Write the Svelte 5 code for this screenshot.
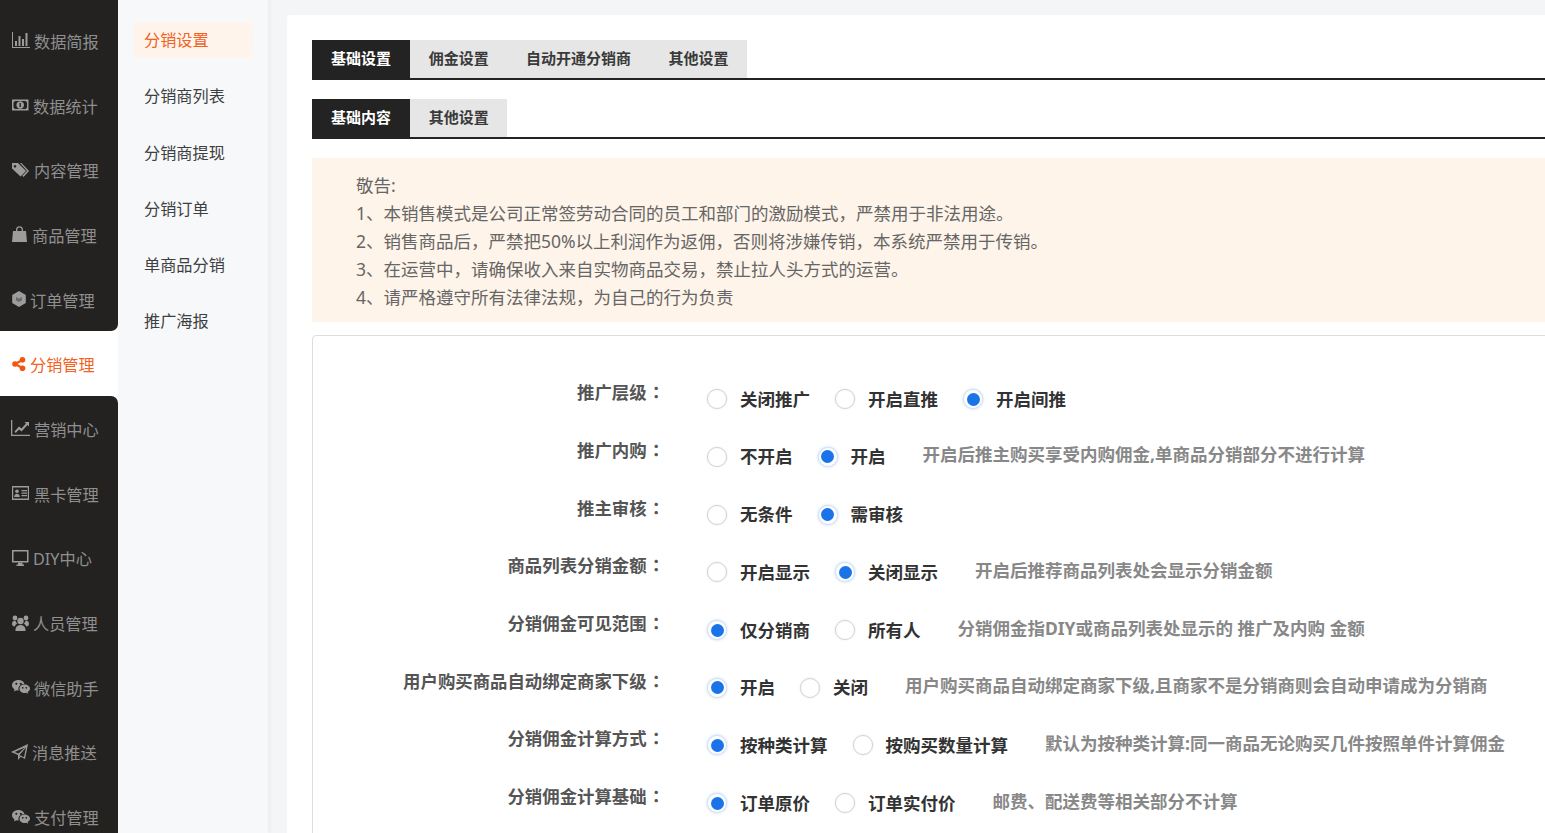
<script>
	const navItems = [
		{ name: '数据简报', icon: 'bar', w: 17 },
		{ name: '数据统计', icon: 'money', w: 16 },
		{ name: '内容管理', icon: 'tag', w: 17 },
		{ name: '商品管理', icon: 'bag', w: 15 },
		{ name: '订单管理', icon: 'cube', w: 13 },
		{ name: '分销管理', icon: 'share', w: 13 },
		{ name: '营销中心', icon: 'line', w: 17 },
		{ name: '黑卡管理', icon: 'card', w: 17 },
		{ name: 'DIY中心', icon: 'desktop', w: 16 },
		{ name: '人员管理', icon: 'users', w: 16 },
		{ name: '微信助手', icon: 'wechat', w: 17 },
		{ name: '消息推送', icon: 'plane', w: 15 },
		{ name: '支付管理', icon: 'wechat', w: 17 }
	];
	const activeNav = 5;

	const subItems = ['分销设置', '分销商列表', '分销商提现', '分销订单', '单商品分销', '推广海报'];

	const notices = [
		'敬告:',
		'1、本销售模式是公司正常签劳动合同的员工和部门的激励模式，严禁用于非法用途。',
		'2、销售商品后，严禁把50%以上利润作为返佣，否则将涉嫌传销，本系统严禁用于传销。',
		'3、在运营中，请确保收入来自实物商品交易，禁止拉人头方式的运营。',
		'4、请严格遵守所有法律法规，为自己的行为负责'
	];

	const rows = [
		{ label: '推广层级', options: ['关闭推广', '开启直推', '开启间推'], checked: 2 },
		{ label: '推广内购', options: ['不开启', '开启'], checked: 1, hint: '开启后推主购买享受内购佣金,单商品分销部分不进行计算' },
		{ label: '推主审核', options: ['无条件', '需审核'], checked: 1 },
		{ label: '商品列表分销金额', options: ['开启显示', '关闭显示'], checked: 1, hint: '开启后推荐商品列表处会显示分销金额' },
		{ label: '分销佣金可见范围', options: ['仅分销商', '所有人'], checked: 0, hint: '分销佣金指DIY或商品列表处显示的 推广及内购 金额' },
		{ label: '用户购买商品自动绑定商家下级', options: ['开启', '关闭'], checked: 0, hint: '用户购买商品自动绑定商家下级,且商家不是分销商则会自动申请成为分销商' },
		{ label: '分销佣金计算方式', options: ['按种类计算', '按购买数量计算'], checked: 0, hint: '默认为按种类计算:同一商品无论购买几件按照单件计算佣金' },
		{ label: '分销佣金计算基础', options: ['订单原价', '订单实付价'], checked: 0, hint: '邮费、配送费等相关部分不计算' }
	];
</script>

<div class="page">
	<nav class="nav">
		{#each navItems as item, n}
			<div
				class="nav-item"
				class:active={n === activeNav}
				class:above={n === activeNav - 1}
				class:below={n === activeNav + 1}
			>
				<svg width={item.w} height="16" viewBox="0 0 {item.w} 16" fill="currentColor">
					{#if item.icon === 'bar'}
						<path d="M0 0h1v15h17v1H0z" /><path d="M3 9h2v5H3zM6.500 4h2v10h-2zM10 7h2v7h-2zM13.500 1h2v13h-2z" />
					{:else if item.icon === 'money'}
						<path fill-rule="evenodd" d="M0 2.500h16.500v11H0zM3 4 1.500 5.500v5L3 12h10.500l1.500-1.500v-5L13.500 4z" /><path fill-rule="evenodd" d="M8.200 4.200a3.800 3.800 0 1 0 .01 0zM7.500 6h1.400v4H7.500z" />
					{:else if item.icon === 'tag'}
						<path fill-rule="evenodd" d="M0 1h6l8 8-5.500 5.500L0 6.500zM3 3a1.300 1.300 0 1 0 .01 0z" /><path d="M8 1h1.500l7.500 8-5.500 6-1.200-1.200 4.700-4.800z" />
					{:else if item.icon === 'bag'}
						<path fill-rule="evenodd" d="M1 5h3V3.800a3.500 3.500 0 0 1 7 0V5h3l1 11H0zM5.300 5h4.400V3.800a2.200 2.200 0 0 0-4.400 0z" />
					{:else if item.icon === 'cube'}
						<path d="M7 0 13.800 4v8L7 16 .2 12V4z" />
						<path d="M7 7.500 10 6v3.500L7 11zM7 7.500 4 6v3.500L7 11z" fill="#6b6b6b" />
					{:else if item.icon === 'share'}
						<circle cx="3" cy="8" r="2.800" /><circle cx="10.500" cy="3.800" r="2.800" /><circle cx="10.500" cy="12.200" r="2.800" /><path d="M2.500 7 10 3l1 2L3.500 9zM3.500 7 11 11l-1 2-7.500-4z" />
					{:else if item.icon === 'line'}
						<path d="M-1 0h1.300v14.700H18V16H-1z" /><path d="M2.500 11.500 7 6.500l2.500 2L14 3.500 12.500 2H17v4.500L15.500 5 9.500 11.500 7 9.500l-3.200 3.500z" />
					{:else if item.icon === 'card'}
						<path fill-rule="evenodd" d="M0 1h17v14H0zM1.200 2.500v11h14.600v-11z" /><circle cx="5" cy="6.300" r="1.800" /><path d="M2.200 12c0-4.500 5.600-4.500 5.600 0zM9.500 5h5.500v1.200H9.500zM9.500 7.500h5.500v1.200H9.500zM9.500 10h5.500v1.200H9.500z" />
					{:else if item.icon === 'desktop'}
						<path fill-rule="evenodd" d="M0 0h16.500v12.500H0zM1.500 1.500v9.500h13.500V1.500z" /><path d="M6 12.500h4.500v2H12v1.500H4.500v-1.500H6z" />
					{:else if item.icon === 'users'}
						<circle cx="8.500" cy="6" r="3.200" /><circle cx="3" cy="3" r="2.400" /><circle cx="14" cy="3" r="2.400" /><path d="M3.500 16c-.8-8 10.800-8 10 0zM0 9c0-3 2-3.500 3.500-3 .3 1 1 2 1.800 2.800C3.800 9.500 3 10.500 2.800 11.500 1.200 11.500 0 10.500 0 9zM17 9c0-3-2-3.500-3.500-3-.3 1-1 2-1.800 2.800 1.500.7 2.300 1.700 2.500 2.700 1.600 0 2.800-1 2.800-2.500z" />
					{:else if item.icon === 'wechat'}
						<path fill-rule="evenodd" d="M6.500 1C3 1 0 3.200 0 6.200c0 1.700 1 3.200 2.500 4.200L2 12.500l2.400-1.200c.7.200 1.500.3 2.300.3-.2-.6-.3-1.100-.3-1.700 0-3 2.800-5 6-5C11.800 2.500 9.300 1 6.500 1zM4.300 3.800a1 1 0 1 0 .01 0zM8.800 3.800a1 1 0 1 0 .01 0z" />
						<path fill-rule="evenodd" d="M12.500 5.500C9.800 5.500 7.500 7.300 7.500 9.800s2.300 4.200 5 4.200c.6 0 1.200-.1 1.700-.3l2 1.100-.5-1.800c1.300-.9 2.300-2 2.300-3.300 0-2.400-2.700-4.200-5.500-4.200zM10.800 8a.8.8 0 1 0 .01 0zM14.300 8a.8.8 0 1 0 .01 0z" />
					{:else if item.icon === 'plane'}
						<path fill-rule="evenodd" d="M16 0 13 15 8.800 12.800 6 16v-5L-1 8zM13 3.500 2.500 8 6.500 9.500zM14 3.500 7.500 11 12 13.200zM7.400 12v1.200l.6-.8z" />
					{/if}
				</svg>
				<span>{item.name}</span>
			</div>
		{/each}
	</nav>

	<aside class="subnav">
		{#each subItems as sub, i}
			<div class="sub-item" class:current={i === 0}>{sub}</div>
		{/each}
	</aside>

	<main class="main">
		<div class="card">
			<div class="tabs">
				<div class="tab on">基础设置</div>
				<div class="tab">佣金设置</div>
				<div class="tab">自动开通分销商</div>
				<div class="tab">其他设置</div>
			</div>
			<div class="tabs second">
				<div class="tab on">基础内容</div>
				<div class="tab">其他设置</div>
			</div>

			<div class="notice">
				{#each notices as line}
					<p>{line}</p>
				{/each}
			</div>

			<div class="form">
				{#each rows as row}
					<div class="row">
						<div class="label">{row.label}<span class="colon">：</span></div>
						<div class="options">
							{#each row.options as opt, i}
								<div class="option">
									<span class="radio" class:checked={i === row.checked}></span>
									<span class="opt-text">{opt}</span>
								</div>
							{/each}
							{#if row.hint}
								<span class="hint">{row.hint}</span>
							{/if}
						</div>
					</div>
				{/each}
			</div>
		</div>
	</main>
</div>

<style>
	:global(body) {
		margin: 0;
		overflow: hidden;
		background: #f4f5f7;
		font-family: "Noto Sans", "Noto Sans CJK SC", sans-serif;
	}

	.page {
		display: flex;
		width: 1545px;
		height: 833px;
		overflow: hidden;
	}

	.nav {
		flex: none;
		width: 118px;
		background: #fff;
	}

	.nav-item {
		display: flex;
		align-items: center;
		gap: 5px;
		height: 64.7px;
		padding-left: 12px;
		box-sizing: border-box;
		font-size: 16.2px;
		color: #8f8f8f;
		background: #232221;
	}

	.nav-item:first-child {
		height: 72.7px;
		padding-top: 8px;
	}

	.nav-item span {
		position: relative;
		top: 0.5px;
	}

	.nav-item svg {
		flex: none;
		overflow: visible;
		color: #9c9c9c;
	}

	.nav-item.above {
		border-bottom-right-radius: 7px;
	}

	.nav-item.below {
		border-top-right-radius: 7px;
	}

	.nav-item.active {
		background: #fff;
		color: #f4611f;
	}

	.nav-item.active svg {
		color: #f4550f;
	}

	.subnav {
		flex: none;
		width: 150px;
		background: #f7f8fa;
		padding: 22.3px 15px 0;
		box-sizing: border-box;
		box-shadow: 2px 0 4px rgba(0, 0, 0, 0.04);
	}

	.sub-item {
		height: 36px;
		line-height: 36px;
		margin-bottom: 20.2px;
		padding-left: 11px;
		font-size: 16.2px;
		color: #3f3f3f;
		border-radius: 6px;
	}

	.sub-item.current {
		background: #fef4ec;
		color: #f4611f;
	}

	.main {
		flex: 1;
		min-width: 0;
		padding: 15px 0 0 19px;
	}

	.card {
		width: 1400px;
		height: 900px;
		background: #fff;
		padding: 25px;
		box-sizing: border-box;
		border-radius: 4px 0 0 0;
	}

	.tabs {
		display: flex;
		height: 38px;
		border-bottom: 2px solid #232323;
	}

	.tabs.second {
		margin-top: 19px;
	}

	.tab {
		padding: 0 18.7px;
		background: #e6e6e6;
		font-size: 15px;
		font-weight: 700;
		line-height: 37px;
		color: #3a3a3a;
	}

	.tab.on {
		padding: 0 19px;
		background: #232323;
		color: #fff;
		height: 40px;
	}

	.notice {
		margin-top: 19px;
		padding: 13px 44px 11px;
		background: #fef4e9;
		font-size: 17.5px;
		line-height: 28px;
		color: #666;
	}

	.notice p {
		margin: 0;
	}

	.form {
		margin-top: 13px;
		padding: 34.3px 0 60px;
		border: 1px solid #ddd;
		border-radius: 4px;
	}

	.row {
		display: flex;
		height: 57.7px;
	}

	.label {
		flex: none;
		width: 351px;
		text-align: right;
		font-size: 17.4px;
		font-weight: 700;
		line-height: 44px;
		color: #555;
	}

	.colon {
		position: relative;
		left: 1px;
		font-family: "Noto Sans CJK TC", sans-serif;
	}

	.options {
		display: flex;
		align-items: center;
		height: 58px;
		padding-left: 43px;
		font-weight: 700;
	}

	.option {
		display: flex;
		align-items: center;
		gap: 13px;
		margin-right: 25px;
	}

	.radio {
		flex: none;
		position: relative;
		width: 18px;
		height: 18px;
		border: 1px solid #d4d4d4;
		border-radius: 50%;
		background: #fff;
		box-shadow: 0 0 2px rgba(0, 0, 0, 0.12);
	}

	.radio.checked {
		border-color: #d2e2f8;
		box-shadow: 0 0 3px rgba(26, 115, 232, 0.3);
	}

	.radio.checked::after {
		content: '';
		position: absolute;
		top: 2.500px;
		left: 2.500px;
		width: 13px;
		height: 13px;
		border-radius: 50%;
		background: #1a73e8;
	}

	.opt-text {
		font-size: 17.5px;
		color: #333;
		position: relative;
		top: -1px;
	}

	.hint {
		margin-left: 12px;
		font-size: 17.5px;
		color: #888;
		position: relative;
		top: -3px;
	}
</style>
